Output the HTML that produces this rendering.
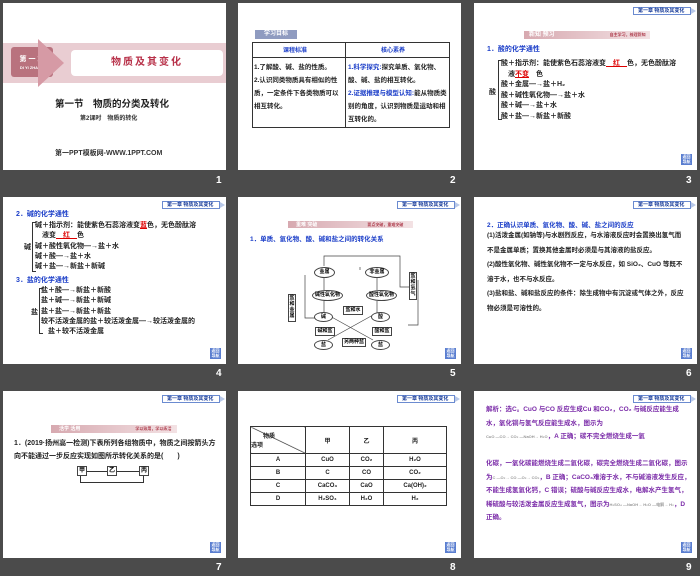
<!DOCTYPE html>
<html><head><meta charset="utf-8"><style>
*{margin:0;padding:0;box-sizing:border-box}
body{width:700px;height:576px;background:#4b4b4b;position:relative;overflow:hidden;font-family:"Liberation Sans","Noto Sans CJK SC",sans-serif;font-weight:bold}
.s{position:absolute;background:#fff;width:223px;height:167px;overflow:hidden}
.n{position:absolute;color:#fff;font-size:10px;font-weight:bold}
.a{position:absolute;white-space:nowrap}
.hd{position:absolute;right:6px;top:4px;height:8px;width:58px;border:1px solid #6b8bd0;background:#fff;font-size:5px;color:#1a3d9a;line-height:6px;padding-left:4px}
.hd:after{content:"";position:absolute;right:-6px;top:0;border-left:5px solid #b8c8e8;border-top:3px solid transparent;border-bottom:3px solid transparent}
.bk{position:absolute;right:5px;bottom:5px;width:11px;height:11px;background:#5a7ed0;color:#fff;font-size:4px;line-height:5px;text-align:center}
.t{font-size:6.5px;color:#222;line-height:13px}
.bl{color:#1a3dc8}
.pu{color:#7a2aa8}
table{border-collapse:collapse}
td{border:1px solid #333;font-size:6px;text-align:center;color:#222}
.ov{position:absolute;border:1px solid #444;border-radius:50%;font-size:5px;text-align:center;line-height:9px;background:#fff}
.bx{position:absolute;border:1px solid #444;font-size:5px;text-align:center;line-height:7px;background:#fff}
.br{position:absolute;border:1px solid #333;border-right:none;width:4px}
</style></head><body>

<!-- slide 1 -->
<div class="s" style="left:3px;top:3px">
 <div class="a" style="left:0;top:40px;width:223px;height:40px;background:#e9cdd2"></div>
 <div class="a" style="left:8px;top:44px;width:42px;height:30px;background:#b9727e;border-radius:3px;color:#fff;font-size:7px;text-align:center;padding-top:7px">第 一 章<br><span style="font-size:4px">DI YI ZHANG</span></div>
 <div class="a" style="left:35px;top:36px;width:0;height:0;border-left:26px solid #d69aa5;border-top:24px solid transparent;border-bottom:24px solid transparent"></div>
 <div class="a" style="left:68px;top:47px;width:152px;height:26px;background:#fff;border-radius:4px;color:#b8324a;font-size:10px;text-align:center;line-height:26px;letter-spacing:2px">物质及其变化</div>
 <div class="a" style="left:52px;top:93px;font-size:9.5px;color:#222">第一节　物质的分类及转化</div>
 <div class="a" style="left:77px;top:110px;font-size:6px;color:#333">第2课时　物质的转化</div>
 <div class="a" style="left:52px;top:145px;font-size:7px;color:#333">第一PPT模板网-WWW.1PPT.COM</div>
</div>
<div class="n" style="left:216px;top:175px">1</div>

<!-- slide 2 -->
<div class="s" style="left:238px;top:3px">
 <div class="a" style="left:17px;top:27px;width:42px;height:9px;background:#8f9bc0;color:#fff;font-size:6px;line-height:9px;text-align:center">学习目标</div>
 <div class="a" style="left:14px;top:39px;width:198px;height:86px;border:1px solid #333"></div>
 <div class="a" style="left:107px;top:39px;width:1px;height:86px;background:#333"></div>
 <div class="a" style="left:14px;top:54px;width:198px;height:1px;background:#333"></div>
 <div class="a bl" style="left:45px;top:42px;font-size:6px">课程标准</div>
 <div class="a bl" style="left:143px;top:42px;font-size:6px">核心素养</div>
 <div class="a t" style="left:16px;top:58px;white-space:normal;width:90px">1.了解酸、碱、盐的性质。<br>2.认识同类物质具有相似的性质，一定条件下各类物质可以相互转化。</div>
 <div class="a t" style="left:110px;top:58px;white-space:normal;width:100px"><span class="bl">1.科学探究:</span>探究单质、氧化物、酸、碱、盐的相互转化。<br><span class="bl">2.证据推理与模型认知:</span>能从物质类别的角度，认识到物质是运动和相互转化的。</div>
</div>
<div class="n" style="left:450px;top:175px">2</div>

<!-- slide 3 -->
<div class="s" style="left:474px;top:3px">
 <div class="hd">第一章 物质及其变化</div>
 <div class="a" style="left:50px;top:28px;width:126px;height:8px;background:linear-gradient(90deg,#d7a9b0,#f3e2e4);color:#fff;font-size:6px;line-height:8px;padding-left:5px">新知 预习<span style="color:#b04050;margin-left:55px;font-size:4px">自主学习，梳理新知</span></div>
 <div class="a bl" style="left:13px;top:41px;font-size:7px">1．酸的化学通性</div>
 <div class="br" style="left:24px;top:57px;height:60px"></div>
 <div class="a" style="left:27px;top:56px;font-size:7px;color:#222;line-height:10.5px;white-space:normal;width:190px">酸＋指示剂：能使紫色石蕊溶液变<u style="color:#d00">　红　</u>色，无色酚酞溶<br>　液<u style="color:#d00">不变</u>　色<br>酸＋金属―→盐＋H₂<br>酸＋碱性氧化物―→盐＋水<br>酸＋碱―→盐＋水<br>酸＋盐―→新盐＋新酸</div>
 <div class="a" style="left:15px;top:84px;font-size:7px;color:#222">酸</div>
 <div class="bk">返回<br>导航</div>
</div>
<div class="n" style="left:686px;top:175px">3</div>

<!-- slide 4 -->
<div class="s" style="left:3px;top:197px">
 <div class="hd">第一章 物质及其变化</div>
 <div class="a bl" style="left:13px;top:12px;font-size:7px">2．碱的化学通性</div>
 <div class="br" style="left:29px;top:25px;height:50px"></div>
 <div class="a" style="left:32px;top:24px;font-size:7px;color:#222;line-height:10.3px;white-space:normal;width:185px">碱＋指示剂：能使紫色石蕊溶液变<u style="color:#d00">蓝</u>色，无色酚酞溶<br>　液变<u style="color:#d00">　红　</u>色<br>碱＋酸性氧化物―→盐＋水<br>碱＋酸―→盐＋水<br>碱＋盐―→新盐＋新碱</div>
 <div class="a" style="left:21px;top:45px;font-size:7px;color:#222">碱</div>
 <div class="a bl" style="left:13px;top:78px;font-size:7px">3．盐的化学通性</div>
 <div class="br" style="left:36px;top:91px;height:46px"></div>
 <div class="a" style="left:38px;top:89px;font-size:7px;color:#222;line-height:10.3px;white-space:normal;width:180px">盐＋酸―→新盐＋新酸<br>盐＋碱―→新盐＋新碱<br>盐＋盐―→新盐＋新盐<br>较不活泼金属的盐＋较活泼金属―→较活泼金属的<br>　盐＋较不活泼金属</div>
 <div class="a" style="left:28px;top:110px;font-size:7px;color:#222">盐</div>
 <div class="bk">返回<br>导航</div>
</div>
<div class="n" style="left:216px;top:368px">4</div>

<!-- slide 5 -->
<div class="s" style="left:238px;top:197px">
 <div class="hd">第一章 物质及其变化</div>
 <div class="a" style="left:50px;top:24px;width:125px;height:7px;background:linear-gradient(90deg,#d7a9b0,#f3e2e4);color:#fff;font-size:5px;line-height:7px;padding-left:8px">重难 突破<span style="color:#b04050;margin-left:50px;font-size:4px">要点突破，重难突破</span></div>
 <div class="a bl" style="left:12px;top:36px;font-size:6.5px">1．单质、氧化物、酸、碱和盐之间的转化关系</div>
 <svg class="a" style="left:0;top:0" width="223" height="167"><g fill="none" stroke="#444" stroke-width="0.7">
 <path d="M86 69V59H162V90H172M67 78V121H80M180 83V128H170M122 73V70M86 80V93M139 80V93M86 104V120M139 104V120M90 118L135 143M90 143L135 118"/></g></svg>
 <div class="ov" style="left:76px;top:70px;width:21px;height:11px">金属</div>
 <div class="ov" style="left:127px;top:70px;width:24px;height:11px">非金属</div>
 <div class="ov" style="left:74px;top:93px;width:31px;height:11px">碱性氧化物</div>
 <div class="ov" style="left:128px;top:93px;width:31px;height:11px">酸性氧化物</div>
 <div class="ov" style="left:76px;top:115px;width:19px;height:10px">碱</div>
 <div class="ov" style="left:133px;top:115px;width:19px;height:10px">酸</div>
 <div class="ov" style="left:76px;top:143px;width:19px;height:10px">盐</div>
 <div class="ov" style="left:133px;top:143px;width:19px;height:10px">盐</div>
 <div class="bx" style="left:105px;top:109px;width:20px">盐和水</div>
 <div class="bx" style="left:77px;top:130px;width:20px">碱和盐</div>
 <div class="bx" style="left:134px;top:130px;width:20px">酸和盐</div>
 <div class="bx" style="left:104px;top:141px;width:24px">另两种盐</div>
 <div class="bx" style="left:50px;top:97px;width:8px;line-height:6px;height:28px">盐和金属</div>
 <div class="bx" style="left:171px;top:75px;width:8px;line-height:6px;height:28px">盐和氢气</div>
 <div class="bk">返回<br>导航</div>
</div>
<div class="n" style="left:450px;top:368px">5</div>

<!-- slide 6 -->
<div class="s" style="left:474px;top:197px">
 <div class="hd">第一章 物质及其变化</div>
 <div class="a bl" style="left:13px;top:22px;font-size:6.5px">2．正确认识单质、氧化物、酸、碱、盐之间的反应</div>
 <div class="a t" style="left:13px;top:32px;white-space:normal;width:200px;line-height:14.5px">(1)活泼金属(如钠等)与水剧烈反应，与水溶液反应时会置换出氢气而不是金属单质；置换其他金属时必须是与其溶液的盐反应。<br>(2)酸性氧化物、碱性氧化物不一定与水反应，如 SiO₂、CuO 等既不溶于水，也不与水反应。<br>(3)盐和盐、碱和盐反应的条件：除生成物中有沉淀或气体之外，反应物必须是可溶性的。</div>
 <div class="bk">返回<br>导航</div>
</div>
<div class="n" style="left:686px;top:368px">6</div>

<!-- slide 7 -->
<div class="s" style="left:3px;top:391px">
 <div class="hd">第一章 物质及其变化</div>
 <div class="a" style="left:48px;top:34px;width:126px;height:8px;background:linear-gradient(90deg,#d7a9b0,#f3e2e4);color:#fff;font-size:5px;line-height:8px;padding-left:8px">活学 活用<span style="color:#b04050;margin-left:55px;font-size:4px">学以致用，学以练活</span></div>
 <div class="a" style="left:11px;top:46px;white-space:normal;width:205px;line-height:13px;font-size:7px;color:#222">1．(2019·扬州高一检测)下表所列各组物质中，物质之间按箭头方向不能通过一步反应实现如图所示转化关系的是(　　)</div>
 <div class="bx" style="left:74px;top:75px;width:10px;height:10px;line-height:9px;font-size:6px">甲</div>
 <div class="bx" style="left:104px;top:75px;width:10px;height:10px;line-height:9px;font-size:6px">乙</div>
 <div class="bx" style="left:136px;top:75px;width:10px;height:10px;line-height:9px;font-size:6px">丙</div>
 <div class="a" style="left:84px;top:80px;width:20px;height:1px;background:#333"></div>
 <div class="a" style="left:114px;top:80px;width:22px;height:1px;background:#333"></div>
 <div class="a" style="left:77px;top:85px;width:64px;height:7px;border:1px solid #333;border-top:none"></div>
 <div class="bk">返回<br>导航</div>
</div>
<div class="n" style="left:216px;top:562px">7</div>

<!-- slide 8 -->
<div class="s" style="left:238px;top:391px">
 <div class="hd">第一章 物质及其变化</div>
 <table class="a" style="left:12px;top:35px;width:197px">
 <tr style="height:27px"><td style="width:55px;text-align:left;background:linear-gradient(to top right,#fff 49%,#333 50%,#fff 52%)">　　物质<br>选项</td><td style="width:44px">甲</td><td style="width:34px">乙</td><td>丙</td></tr>
 <tr style="height:13px"><td>A</td><td>CuO</td><td>CO₂</td><td>H₂O</td></tr>
 <tr style="height:13px"><td>B</td><td>C</td><td>CO</td><td>CO₂</td></tr>
 <tr style="height:13px"><td>C</td><td>CaCO₃</td><td>CaO</td><td>Ca(OH)₂</td></tr>
 <tr style="height:13px"><td>D</td><td>H₂SO₄</td><td>H₂O</td><td>H₂</td></tr>
 </table>
 <div class="bk">返回<br>导航</div>
</div>
<div class="n" style="left:450px;top:562px">8</div>

<!-- slide 9 -->
<div class="s" style="left:474px;top:391px">
 <div class="hd">第一章 物质及其变化</div>
 <div class="a t pu" style="left:12px;top:12px;white-space:normal;width:205px;line-height:13.5px">解析：选C。CuO 与CO 反应生成Cu 和CO₂，CO₂ 与碱反应能生成水，氧化铜与氢气反应能生成水，图示为<br><span style="font-size:4px;color:#999">CuO ―CO→ CO₂ ―NaOH→ H₂O</span>，A 正确；碳不完全燃烧生成一氧<br><br>化碳，一氧化碳能燃烧生成二氧化碳，碳完全燃烧生成二氧化碳，图示为<span style="font-size:4px;color:#999">C ―O₂→ CO ―O₂→ CO₂</span>，B 正确；CaCO₃难溶于水，不与碱溶液发生反应，不能生成氢氧化钙，C 错误；硫酸与碱反应生成水，电解水产生氢气，稀硫酸与较活泼金属反应生成氢气，图示为<span style="font-size:4px;color:#999">H₂SO₄ ―NaOH→ H₂O ―电解→ H₂</span>，D 正确。</div>
 <div class="bk">返回<br>导航</div>
</div>
<div class="n" style="left:686px;top:562px">9</div>

</body></html>
